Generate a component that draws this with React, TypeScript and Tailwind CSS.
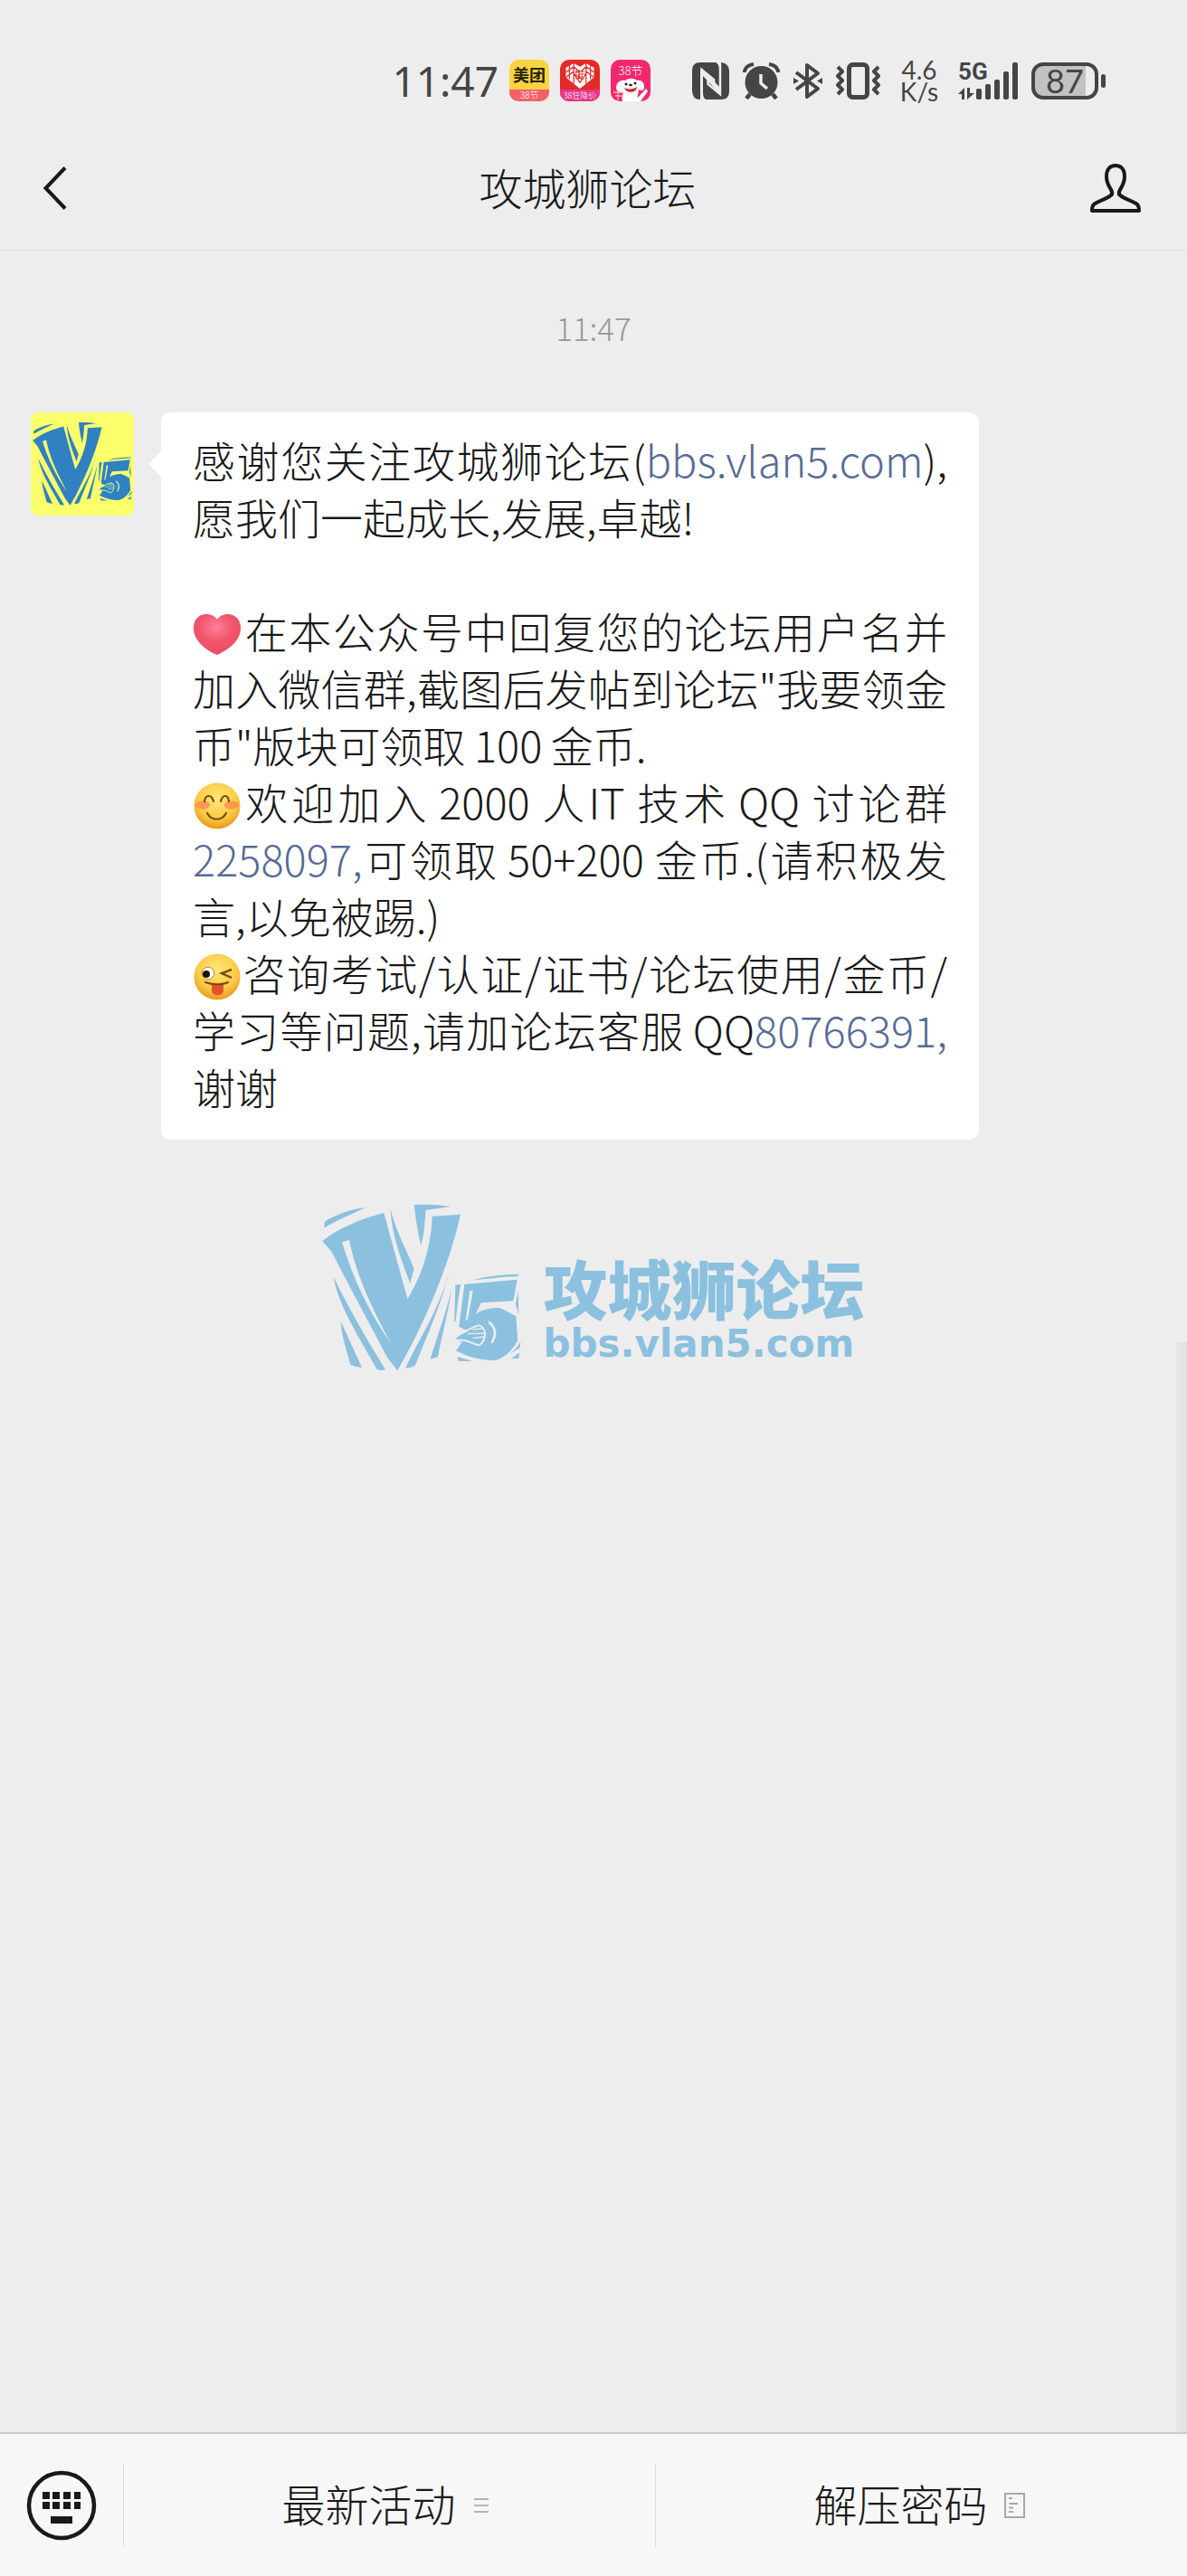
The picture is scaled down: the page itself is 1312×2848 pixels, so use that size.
import type { ReactNode } from "react";

const LINK = "text-[#576b95]";

function V5Mark({ className, color, ground }: { className: string; color: string; ground: string }) {
    return (
        <svg viewBox="48 60 660 560" className={className} fill={color} aria-hidden="true">
            {/* V */}
            <path fillRule="evenodd" d="M49 186C108 140 180 112 253 93L331 378C378 305 410 205 413 104L507 98C476 240 400 440 298 616L264 572C200 450 130 320 80 222ZM114 190C150 310 205 425 277 527C225 430 165 315 138 183Z" />
            <path d="M57 121C95 98 145 80 192 75C150 95 95 118 55 143Z" />
            <path d="M275 82C295 160 330 220 353 278L340 326C310 250 278 160 275 82Z" />
            <path d="M354 66C395 64 440 67 474 72L391 84C390 125 385 165 376 202C365 150 357 110 354 66Z" />
            <path d="M86 304C130 400 195 510 258 613Q245 617 230 612C180 520 100 400 86 304Z" />
            <path d="M110 452L180 606Q160 604 142 596C130 550 112 500 110 452Z" />
            <path d="M474 270C450 380 400 490 356 600Q340 608 324 608C370 510 445 400 474 270Z" />
            <path d="M478 342C465 430 445 500 432 570L407 578C430 500 458 430 478 342Z" />
            {/* 5 */}
            <path d="M490 332L508 330C500 370 495 410 491 452L487 456Z" />
            <path d="M547 316C590 303 650 296 700 297L697 303C650 303 600 312 547 316Z" />
            <path fillRule="evenodd" d="M520 330L695 314L682 385L575 391L558 428C580 412 610 408 635 408C655 414 672 427 691 435L697 515C680 550 650 575 620 582C575 582 530 570 492 550L512 522L490 512L502 500L532 486L502 470ZM538 350L524 450L531 446L548 352Z" />
            <path d="M698 352L700 430L690 395Z" />
            <path d="M497 570L548 585L499 584Z" />
            <path d="M706 520L704 540L650 574C675 560 692 545 706 520ZM703 556L700 575L675 577Z" />
            <g fill="none" stroke={ground} strokeWidth="6">
                <path d="M492 486C525 492 545 470 570 466C592 475 596 510 570 532C545 530 530 508 490 516" />
                <path d="M530 494L590 492M548 508L586 504M548 480L584 476" strokeWidth="4" />
                <path d="M600 454C626 475 626 500 610 524" strokeWidth="8" />
            </g>
        </svg>
    );
}

function HeartEmoji() {
    return (
        <svg viewBox="0 0 54 48" className="mr-0.5 inline-block h-12 w-[54px] align-[-8px]" role="img" aria-label="爱心">
            <defs>
                <radialGradient id="heart" cx="0.48" cy="0.32" r="0.7">
                    <stop offset="0" stopColor="#fd7f9c" />
                    <stop offset="0.5" stopColor="#f2566c" />
                    <stop offset="1" stopColor="#e84d62" />
                </radialGradient>
            </defs>
            <path d="M27 8C22 -1 2 -1 1 16C0 31 15 42 27 47C39 42 54 31 53 16C52 -1 32 -1 27 8Z" fill="url(#heart)" />
        </svg>
    );
}

function Face({ label, children }: { label: string; children: ReactNode }) {
    return (
        <svg viewBox="0 0 52 52" className="mx-px inline-block size-[52px] align-[-11px]" role="img" aria-label={label}>
            <defs>
                <radialGradient id="face" cx="0.5" cy="0.35" r="0.65">
                    <stop offset="0" stopColor="#ffe77a" />
                    <stop offset="0.65" stopColor="#fccb45" />
                    <stop offset="1" stopColor="#e9981f" />
                </radialGradient>
            </defs>
            <circle cx="26" cy="26" r="25.5" fill="url(#face)" />
            {children}
        </svg>
    );
}

function SmileEmoji() {
    return (
        <Face label="愉快">
            <ellipse cx="10" cy="25" rx="8" ry="4.5" fill="#f68255" opacity="0.7" />
            <ellipse cx="42" cy="25" rx="8" ry="4.5" fill="#f68255" opacity="0.7" />
            <g fill="none" stroke="#7a4a0c" strokeWidth="2.2" strokeLinecap="round">
                <path d="M12 21C13 13 20 13 22 21M30 21C32 13 38 13 39 21" />
                <path d="M15 34C20 43 31 43 36 34" />
            </g>
        </Face>
    );
}

function WinkEmoji() {
    return (
        <Face label="调皮">
            <circle cx="16" cy="22" r="6.8" fill="#fff" stroke="#b8862a" />
            <circle cx="14" cy="23" r="4" fill="#1c1208" />
            <path d="M42 18L31 22L42 27" fill="none" stroke="#7a4a0c" strokeWidth="2.4" />
            <path d="M20 34H33V41C33 48 20 48 20 41Z" fill="#e4522c" />
            <path d="M13 32C20 35 32 35 38 32" fill="none" stroke="#7a4a0c" strokeWidth="2.2" strokeLinecap="round" />
        </Face>
    );
}

function AppBadges() {
    return (
        <div className="flex gap-3">
            <div className="flex h-[46px] w-11 flex-col overflow-hidden rounded-[10px] bg-[#f9d340] text-center">
                <span className="h-[33px] text-[18px] leading-[33px] font-bold text-[#2a2208]">美团</span>
                <span className="h-[13px] bg-[#f2606c] text-[10px] leading-[12px] text-white">38节</span>
            </div>
            <div className="flex h-[46px] w-11 flex-col items-center overflow-hidden rounded-[10px] bg-[#e42a26]">
                <svg viewBox="0 0 34 30" className="mt-1 h-[29px] w-[34px]" aria-hidden="true">
                    <path d="M17 4L24 0L33 5V16L17 29L1 16V5L10 0Z" fill="#fff" />
                    <path d="M1 10L10 4L17 10L24 4L33 10M1 16L9 10L17 22L25 10L33 16M5 2V18M10 0V23M24 0V23M29 2V18" fill="none" stroke="#e42a26" strokeWidth="1.3" />
                    <rect x="12" y="8" width="10" height="10" fill="#e42a26" />
                    <path d="M14 9V17M12.500 12H16M18 8V17M21 8V17M16.500 11H22M16.500 14H22" stroke="#fff" strokeWidth="1" />
                </svg>
                <span className="w-full bg-[#e8368a] text-center text-[9px] leading-[13px] whitespace-nowrap text-white">38狂降价</span>
            </div>
            <div className="flex h-[46px] w-11 flex-col items-center overflow-hidden rounded-[10px] bg-[#f2286e]">
                <span className="h-[19px] text-[13px] leading-[24px] text-white">38节</span>
                <svg viewBox="0 0 44 27" className="h-[27px] w-11" aria-hidden="true">
                    <path d="M13 27C12 21 13 18 15 17C10 19 6 17 6 11C7 5 12 3 16 4C20 1 26 1 29 4C34 3 37 6 37 11C37 15 34 16 31 14C31 18 29 20 30 23L39 13L41 16L33 27Z" fill="#fff" />
                    <path d="M15 12C18 14 26 14 29 11C29 18 17 19 15 12Z" fill="#d1252e" />
                    <circle cx="17" cy="8" r="1.500" fill="#222" />
                    <circle cx="27" cy="7" r="1.500" fill="#222" />
                    <ellipse cx="22" cy="9" rx="2" ry="1.300" fill="#222" />
                    <path d="M3 17H12M5 21H12M8 14V26" stroke="#ffb3a6" strokeWidth="1.300" />
                </svg>
            </div>
        </div>
    );
}

function StatusIcons() {
    return (
        <div className="flex items-center gap-[15px] text-[#454545]">
            <svg viewBox="0 0 41 41" className="size-[41px]" aria-label="NFC" role="img">
                <path d="M9 0H26Q30 2 30 8V27L12 8Q9 6 9 10V41Q0 41 0 31V9Q0 0 9 0Z" fill="currentColor" />
                <path d="M32 0Q41 1 41 10V32Q41 41 32 41H15Q12 39 12 34V15L29 33Q32 36 32 31Z" fill="currentColor" />
                <path d="M10.500 41V8L24 19V25M17.500 18V24L31 35V2" fill="none" stroke="#ededed" strokeWidth="2.500" />
            </svg>
            <svg viewBox="0 0 41 41" className="size-[41px]" aria-label="闹钟" role="img">
                <circle cx="20.500" cy="22" r="18" fill="currentColor" />
                <path d="M1.500 11Q3 3 12 2M29 2Q38 3 39.500 11" fill="none" stroke="currentColor" strokeWidth="4" />
                <path d="M8 35L4 40M33 35L37 40" stroke="currentColor" strokeWidth="4.500" />
                <path d="M20 13V23L27 29" fill="none" stroke="#ededed" strokeWidth="3.500" />
            </svg>
            <svg viewBox="0 0 32 41" className="h-[41px] w-8" fill="none" stroke="currentColor" strokeWidth="4" strokeLinejoin="round" aria-label="蓝牙" role="img">
                <path d="M3 11L27 29L15 38V3L27 12L3 30" />
                <path d="M0 17L6 20.500L0 24ZM32 17L26 20.500L32 24Z" fill="currentColor" stroke="none" />
            </svg>
            <svg viewBox="0 0 49 41" className="h-[41px] w-[49px]" fill="none" stroke="currentColor" strokeWidth="4" strokeLinejoin="round" aria-label="振动" role="img">
                <rect x="14.500" y="2.500" width="20" height="36" rx="4" strokeWidth="5" />
                <path d="M2 5L7 10L2 15L7 20L2 25L7 30L2 35M47 5L42 10L47 15L42 20L47 25L42 30L47 35" />
            </svg>
            <div className="flex w-14 flex-col text-center font-[Lato,sans-serif] text-[28px] leading-6 font-normal">
                <span>4.6</span>
                <span>K/s</span>
            </div>
            <div className="flex h-[41px] w-[66px] items-end">
                <div className="flex h-full w-5 flex-col justify-between">
                    <span className="font-[Roboto,sans-serif] text-[26px] leading-5 font-bold">5G</span>
                    <svg viewBox="0 0 18 13" className="h-[13px] w-[18px]" fill="currentColor" aria-hidden="true">
                        <path d="M0 7L7 0V13H4V7ZM10 0V13L18 6H13V0Z" />
                    </svg>
                </div>
                <svg viewBox="0 0 46 41" className="h-[41px] w-[46px]" fill="currentColor" aria-hidden="true">
                    <rect x="0" y="29" width="6" height="12" rx="2" />
                    <rect x="10" y="24" width="6" height="17" rx="2" />
                    <rect x="20" y="19" width="6" height="22" rx="2" />
                    <rect x="30" y="10" width="6" height="31" rx="2" />
                    <rect x="40" y="0" width="6" height="41" rx="2" />
                </svg>
            </div>
            <div className="flex items-center gap-[3px]">
                <div className="flex h-[41px] w-[74px] items-center justify-center rounded-[13px] border-4 border-current bg-linear-to-r from-[#c2c2c2] from-85% to-[#ededed] to-85% font-[Lato,sans-serif] text-[36px] leading-8 font-normal">
                    87
                </div>
                <div className="h-[15px] w-[5px] rounded-[3px] bg-current" />
            </div>
        </div>
    );
}

function Header() {
    return (
        <header className="border-b-2 border-[#e7e7e7]">
            <div className="flex h-32 items-center justify-end pt-[50px] pr-[90px]">
                <time className="mr-3 font-['Noto_Sans',sans-serif] text-[46px] leading-none font-normal text-[#454545]">11:47</time>
                <AppBadges />
                <div className="w-[46px]" />
                <StatusIcons />
            </div>
            <div className="flex h-[148px] items-center justify-between pt-3 pr-[51px] pl-12">
                <button type="button" aria-label="返回" className="w-[50px]">
                    <svg viewBox="0 0 26 48" className="h-12 w-[26px]" fill="none" stroke="#191919" strokeWidth="4">
                        <path d="M24 1.500L2.500 24L24 46.500" />
                    </svg>
                </button>
                <h1 className="pb-1 text-[48px] leading-none">攻城狮论坛</h1>
                <button type="button" aria-label="公众号主页" className="flex w-[60px] justify-end">
                    <svg viewBox="0 0 56 54" className="h-[54px] w-14" fill="none" stroke="#191919" strokeWidth="4" strokeLinejoin="round">
                        <path d="M24 34C26 29 18 26 18 14C18 6 22 2 28 2S38 6 38 14C38 26 30 29 32 34C37 39 47 41 52 45Q54 47 54 52H2Q2 47 4 45C9 41 19 39 24 34Z" />
                    </svg>
                </button>
            </div>
        </header>
    );
}

function Message() {
    return (
        <div className="mt-[70px] flex items-start gap-[30px] pl-[34px]">
            <div className="flex size-[114px] shrink-0 items-center justify-center overflow-hidden rounded-lg bg-[#fbff6b]">
                <V5Mark className="w-[110px]" color="#2f81c1" ground="#c5ff9a" />
            </div>
            <div className="relative w-[904px] rounded-[10px] bg-white px-[35px] pt-5 pb-7">
                <div className="absolute top-[47px] -left-2.5 size-5 rotate-45 rounded-[3px] bg-white" />
                <p className="text-justify text-[47px] leading-[63px]">
                    感谢您关注攻城狮论坛(<a href="#bbs" className={LINK}>bbs.vlan5.com</a>),愿我们一起成长,发展,卓越!
                </p>
                <p className="mt-[63px] text-justify text-[47px] leading-[63px]">
                    <HeartEmoji />在本公众号中回复您的论坛用户名并加入微信群,截图后发帖到论坛"我要领金币"版块可领取&thinsp;100&thinsp;金币.
                </p>
                <p className="text-justify text-[47px] leading-[63px]">
                    <SmileEmoji />欢迎加入&thinsp;2000&thinsp;人IT&thinsp;技术&thinsp;QQ&thinsp;讨论群<a href="#group" className={LINK}>2258097,</a>可领取&thinsp;50+200&thinsp;金币.(请积极发言,以免被踢.)
                </p>
                <p className="text-justify text-[47px] leading-[63px]">
                    <WinkEmoji />咨询考试/认证/证书/论坛使用/金币/学习等问题,请加论坛客服&thinsp;QQ<a href="#service" className={LINK}>80766391,</a>谢谢
                </p>
            </div>
        </div>
    );
}

function Watermark() {
    return (
        <div className="mt-[70px] flex justify-center gap-6 text-[#8bc0df]">
            <V5Mark className="w-[220px]" color="#8bc0df" ground="#ededed" />
            <div className="flex flex-col pt-[54px]">
                <span className="text-[71px] leading-[76px] font-black">攻城狮论坛</span>
                <span className="pt-0.5 font-['DejaVu_Sans',sans-serif] text-[42px] leading-[48px] font-bold">bbs.vlan5.com</span>
            </div>
        </div>
    );
}

function Footer() {
    return (
        <footer className="flex h-[159px] items-center border-t-2 border-[#cbcbcb] bg-[#f7f7f7]">
            <button type="button" aria-label="切换键盘" className="flex h-[92px] w-[137px] items-center justify-center border-r border-[#dcdcdc]">
                <svg viewBox="0 0 78 78" className="size-[78px]" fill="#191919">
                    <circle cx="39" cy="39" r="36" fill="none" stroke="#191919" strokeWidth="4.500" />
                    <path d="M18 24h8v8h-8zM29 24h8v8h-8zM41 24h8v8h-8zM53 24h7v8h-7zM18 35h8v8h-8zM29 35h8v8h-8zM41 35h8v8h-8zM53 35h7v8h-7zM27 51h24v8H27z" />
                </svg>
            </button>
            <button type="button" className="flex h-[92px] flex-1 items-center justify-center gap-[18px] border-r border-[#dcdcdc] pr-1 text-[48px] leading-none">
                <span className="pb-1.5">最新活动</span>
                <svg viewBox="0 0 24 28" className="h-7 w-6" stroke="#b4b4b4" strokeWidth="2" aria-hidden="true">
                    <path d="M2 7H18M2 14H18M2 21H18" />
                </svg>
            </button>
            <button type="button" className="flex h-[92px] flex-1 items-center justify-center gap-[18px] pr-1 text-[48px] leading-none">
                <span className="pb-1.5">解压密码</span>
                <svg viewBox="0 0 24 28" className="h-7 w-6" fill="none" stroke="#a8a8a8" strokeWidth="2" aria-hidden="true">
                    <path d="M1 1H22V27H1Z" />
                    <path d="M5 6H9M5 12H15M5 16.500H10M5 21H10" />
                </svg>
            </button>
        </footer>
    );
}

export default function App() {
    return (
        <div className="flex min-h-screen flex-col bg-[#ededed] font-['Noto_Sans_CJK_SC',sans-serif] font-light text-[#191919]">
            <Header />
            <main className="relative flex-1">
                <p className="mt-[60px] text-center text-[35px] leading-[48px] text-[#999]">11:47</p>
                <Message />
                <Watermark />
                {/* scroll thumb */}
                <div className="absolute right-0 bottom-0 h-1/2 w-3 bg-linear-to-r from-[#e8e8e8] to-[#dfdfdf]" />
            </main>
            <Footer />
        </div>
    );
}
